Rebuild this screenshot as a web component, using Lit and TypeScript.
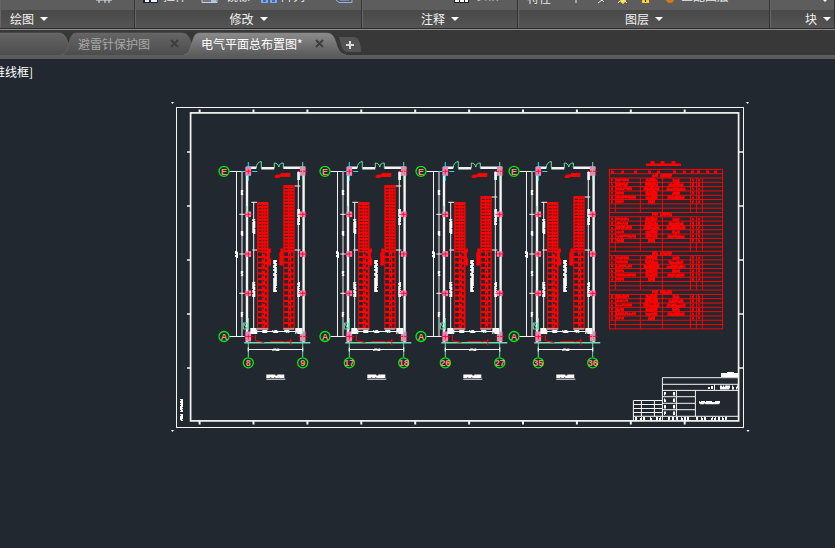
import { LitElement, html, svg, css } from "lit";
import { customElement } from "lit/decorators.js";
import { classMap } from "lit/directives/class-map.js";

const range = (n: number) => Array.from({ length: n }, (_, i) => i);

/** Tiny lettering seen from far away: a solid run of bars with slightly uneven heights. */
function scribble(x: number, y: number, length: number, size: number, upright = false) {
  let d = "";
  for (let i = 0; i < length; i++) {
    const seed = Math.sin(i * 12.9 + x * 7.3 + y * 3.1) * 43758.5;
    const n = seed - Math.floor(seed);
    const cut = n < 0.18 ? size * 0.3 : 0;
    const low = n > 0.8 ? size * 0.25 : 0;
    const s = size - cut - low;
    d += upright
      ? `M${x + cut} ${y + i}h${s}v1h${-s}z`
      : `M${x + i} ${y + cut}h1v${s}h-1z`;
  }
  return d;
}

interface Bay { x: number; left: string; right: string; rightTop: number; }

const bays: Bay[] = [
  { x: 248, left: "8", right: "9", rightTop: 185 },
  { x: 349, left: "17", right: "18", rightTop: 185 },
  { x: 445, left: "26", right: "27", rightTop: 196 },
  { x: 538, left: "35", right: "36", rightTop: 196 },
];

@customElement("drawing-sheet")
export class DrawingSheet extends LitElement {
  static styles = css`
    :host { display: block; }
    svg { display: block; width: 100%; }
    .w { stroke: #f4f4f4; fill: none; }
    .wf { fill: #fff; }
    .r { stroke: #f00; fill: none; }
    .rf { fill: #f00; }
    .bg { fill: #212830; }
    .p { fill: #ff7cba; }
    .c { stroke: #00f0f0; fill: none; }
    .g { stroke: #6fdcab; fill: none; }
    .bubble { stroke: #00f000; fill: none; stroke-width: 1.3; }
    .mark { fill: #ff8a80; font: 700 9px "Liberation Sans Narrow", "Liberation Sans", Arial, sans-serif; text-anchor: middle; }
  `;

  private cabinets(x: number, top: number, mirrored: boolean) {
    const upper = range(Math.ceil((248 - top) / 3.2)).map((i) => top + 3 + i * 3.2);
    const lower = range(14).map((i) => 252.5 + i * 5.5);
    return svg`
      <rect class="rf" x=${x} y=${top} width="11.4" height=${329 - top}></rect>
      ${upper.map((y) => svg`<path class="bg" d="M${x + 1.5} ${y}h3v1h-3zM${x + 6} ${y}h1.2v1h-1.2zM${x + 8.5} ${y}h1.5v1h-1.5z"></path>`)}
      ${lower.map((y, i) => svg`<path class="bg" d="M${x + 1} ${y}h3.6v3.6h-3.6z${
        mirrored
          ? `M${x + 5.6} ${y + 2}h1.2v1.8h-1.2zM${x + 8} ${y}h2v3.6h-2z`
          : `M${x + 5.6} ${y}h${i % 3 ? 1 : 2}v1.8h-${i % 3 ? 1 : 2}zM${x + 8} ${y + 1}h1.6v2.8h-1.6z`}"></path>`)}`;
  }

  private bay({ x, left, right, rightTop }: Bay) {
    const axes = [171.3, 214.3, 254, 293.3, 336.5];
    return svg`<g transform="translate(${x + 0.3} 0)">
      <path class="w" d="M-19 171.5H-2M-19 336.5H-2M-11.8 171V337M-6.3 171V337"></path>
      <path class="w" d="M-9 214.3h6M-9 254h6M-9 293.3h6"></path>
      <path class="wf" d="${scribble(-7.5, 190, 5, 2.4, true)}${scribble(-7.5, 231, 5, 2.4, true)}${scribble(-7.5, 271, 5, 2.4, true)}${scribble(-7.5, 312, 5, 2.4, true)}${scribble(-13.3, 251, 7, 3, true)}"></path>
      <path class="w" stroke-width="2.4" d="M-1.3 167V343M55.3 167V343M-2 167.8H8M13 168.3H26M35 167.8H57"></path>
      <path class="w" d="M5.4 202V331M50 171V331M3 202.3h6M4 250h5M46 ${rightTop + 1}h6M46 250h6"></path>
      <path class="wf" d="${scribble(4, 219, 15, 3, true)}${scribble(4, 282, 15, 3, true)}${scribble(49, 209, 16, 2.6, true)}${scribble(49, 282, 15, 2.6, true)}${scribble(49, 172, 8, 2.6, true)}"></path>
      ${this.cabinets(8.8, 202, false)}
      ${this.cabinets(35, rightTop, true)}
      <path class="rf" d="M19 248.5h3.6v4h-1v6h1.2v7H19zM35 248.5h-3v4h-1v13h4z"></path>
      <path class="wf" d="${scribble(24.9, 260, 32, 3.6, true)}"></path>
      <path class="rf" d="M26 176l3-1.5h3l1-1.500h9v4h-10l-2 1h-3z"></path>
      ${axes.map((y, i) => {
        const h = i === 0 ? 9 : i === 4 ? 10 : 5.6;
        return svg`
          <rect class="p" x="-2.8" y=${y - h / 2} width="5.600" height=${h}></rect>
          <rect class="p" x="51.6" y=${y - h / 2} width="5.600" height=${h}></rect>
          <path class="r" stroke-width="0.8" d="M-4 ${y}h9M0 ${y - 2}v5M50 ${y}h9M54.400 ${y - 2}v5"></path>`;
      })}
      <path class="c" d="M0 162v6M0 174v7M-7 171.500h4M4 171.500h5"></path>
      <path class="g" d="M54.400 162v19M8 168c0-4 2-6 5-6.500v7M26 168v-5c2 0 4 1 4.500 4c.5-3 2-4 4.500-4v5"></path>
      <path class="g" d="M-1.500 206v8M0 318v12M-5 323h4v6h-4zM-5 323l4 6M0 342v15M54.400 330v27"></path>
      <path class="wf" d="${scribble(2, 328, 7, 6)}${scribble(47, 328, 7, 6)}${scribble(14, 330, 5, 3)}${scribble(24, 330, 6, 3)}${scribble(36, 330, 5, 3)}"></path>
      <path class="w" d="M4 331.500H51M8 329h12M35 329h11"></path>
      <path class="g" stroke-width="1.600" d="M-4 342.800H62"></path>
      <path class="r" d="M7 335v6M8 341l8 1.500M22 341.500h14M37 341.800l6-1M42.500 339v6"></path>
      <path class="w" stroke-width="1.200" d="M0 349.500H55M0 347.500v4M54.400 347.500v4"></path>
      <path class="wf" d="${scribble(24, 348.5, 7, 2.6)}"></path>
      <circle class="bubble" cx="-24.300" cy="171.300" r="5"></circle>
      <circle class="bubble" cx="-24.300" cy="336.500" r="5"></circle>
      <circle class="bubble" cx="0" cy="362.800" r="5"></circle>
      <circle class="bubble" cx="54.400" cy="362.800" r="5"></circle>
      <text class="mark" x="-24.300" y="174.500">E</text>
      <text class="mark" x="-24.300" y="339.700">A</text>
      <text class="mark" x="0" y="366">${left}</text>
      <text class="mark" x="54.400" y="366">${right}</text>
      <path class="wf" d="${scribble(18, 374.6, 18, 3.4)}"></path>
      <path class="w" d="M18 379.200h19"></path>
    </g>`;
  }

  private schedule() {
    const top = 169.4;
    const pitch = 4.31;
    const cols = [615.4, 640.4, 662.4, 690.4, 696.4, 702.4];
    const names = [13, 12, 16, 8, 20, 8];
    const models = [12, 13, 16, 12, 12, 7];
    const notes = [7, 15, 19, 8, 17, 0];
    return svg`
      <path class="rf" d="M646 163.500h35v2.600h-35zM650.500 161h4v3h-4zM660.500 161h4v3h-4zM671.500 161h4v3h-4z"></path>
      <path class="r" d="${range(38).map((i) => `M609 ${top + i * pitch}H723`).join("")}M609.400 169V329M722.600 169V329"></path>
      ${[612, 622, 635, 649, 658, 674, 684, 692, 698, 707, 715].map((x) => svg`<path class="rf" d="${scribble(x - 1, top + 1, 3, 3)}"></path>`)}
      ${range(4).map((g) => {
        const y = top + pitch * (1 + g * 9);
        return svg`
          <path class="r" d="${cols.map((x) => `M${x} ${y + pitch}V${y + pitch * 9}`).join("")}"></path>
          <path class="rf" d="${scribble(652, y, 6, 4)}${scribble(660, y, 12, 4)}"></path>
          ${range(6).map((i) => {
            const ry = y + pitch * (i + 1) + 0.6;
            return svg`<path class="rf" d="${scribble(611, ry, 2, 3)}${scribble(616, ry, names[i], 3)}${scribble(651.5 - models[i] / 2, ry - 0.6, models[i], 4.6)}${scribble(676 - notes[i] / 2, ry, notes[i], 3.8)}${scribble(692, ry, 2, 3)}${scribble(698, ry, 2, 3)}"></path>`;
          })}`;
      })}`;
  }

  private frame() {
    const across = range(10).map((i) => 199.6 + i * 53.9);
    const down = range(5).map((i) => 152 + i * 54);
    return svg`
      <rect class="w" x="176.500" y="107.500" width="567" height="320"></rect>
      <rect class="w" stroke-width="1.700" x="190.600" y="112.900" width="548" height="308"></rect>
      <path class="w" stroke-width="2" d="${across.map((x) => `M${x} 109.500v3M${x} 421v3.500`).join("")}"></path>
      <path class="w" stroke-width="1.300" d="${down.map((y) => `M187 ${y}h4M739 ${y}h4`).join("")}"></path>
      <path class="wf" d="M171 102h3l-1.500 2zM746 102h3l-1.500 2zM171 430h3l-1.500 2zM746.500 430h3l-1.500 2z"></path>
      <path class="wf" d="${scribble(180, 399, 13, 3, true)}${scribble(180, 414, 7, 3, true)}"></path>`;
  }

  private titleBlock() {
    return svg`
      <path class="w" d="M662.400 421V377.700H738M662.400 384.300H738M662.400 390.400H738M633 416.300H738M676.400 390V416M695.400 390V416M662 396.700h33M662 403.300h33M662 409.700h33M714.500 384v6"></path>
      <path class="w" d="M633.400 421V400.500H662M633 404.500h29M633 408.500h29M633 412.500h29M641.400 400v16M654.400 400v16"></path>
      <path class="wf" d="M721 373h6v-1h7v1h4v4h-17z"></path>
      <path class="wf" d="${[392, 398.5, 405, 411.500].map((y) => scribble(664, y, 2, 3.400) + scribble(673, y, 2, 3.400)).join("")}${scribble(699, 401, 21, 3.200)}${scribble(708, 386, 2, 3)}${scribble(711, 386, 2, 3)}${scribble(720, 385.500, 10, 4)}${scribble(732, 385.500, 2, 4)}${scribble(736, 385.500, 2, 4)}"></path>
      <path class="wf" d="${[635, 640, 643, 650, 656, 659, 668, 672, 676, 681, 684, 687, 696, 701, 704, 711, 714, 718, 722, 725].map((x) => scribble(x, 417, 2, 3.500)).join("")}"></path>`;
  }

  render() {
    return html`<svg viewBox="0 84 835 360" role="img" aria-label="电气平面总布置图">
      ${this.frame()}${bays.map((b) => this.bay(b))}${this.schedule()}${this.titleBlock()}
    </svg>`;
  }
}

@customElement("ribbon-panel")
export class RibbonPanel extends LitElement {
  static properties = { name: {} };
  declare name: string;
  static styles = css`
    :host {
      display: grid;
      grid-template-rows: 10px 18px;
      box-sizing: border-box;
      height: 28px;
      border-right: 1px solid #333;
      border-left: 1px solid #666;
      min-width: 0;
      overflow: hidden;
    }
    .tools { overflow: hidden; background: #5d5d5d; }
    button {
      display: flex;
      align-items: center;
      justify-content: var(--title-align, center);
      gap: 6px;
      padding: 0 var(--title-pad, 0);
      border: 0;
      background: linear-gradient(#494949, #545454);
      color: #f2f2f2;
      font: 12px/18px "Noto Sans CJK SC", sans-serif;
      white-space: nowrap;
    }
    .arrow { width: 8px; height: 4px; fill: #fff; }
  `;
  render() {
    return html`
      <div class="tools"><slot></slot></div>
      <button type="button">${this.name}<svg class="arrow" viewBox="0 0 8 4"><path d="M0 0h8L4 4z"></path></svg></button>`;
  }
}

@customElement("app-root")
export class AppRoot extends LitElement {
  static styles = css`
    :host {
      display: flex;
      flex-direction: column;
      min-height: 100vh;
      overflow: hidden;
      background: #212830;
      font: 12px/18px "Noto Sans CJK SC", sans-serif;
    }
    .ribbon {
      display: grid;
      grid-template-columns: 135px 227px 156px 252px 1fr;
      height: 28px;
      background: #5d5d5d;
    }
    .start { --title-align: flex-start; --title-pad: 9px; }
    .end { --title-align: flex-start; --title-pad: 34px; }
    .tool { display: block; width: 100%; height: 10px; }
    .tool text { fill: #e4e8ec; font: 12px "Noto Sans CJK SC", sans-serif; }
    .edge { height: 2px; background: linear-gradient(#2c2c2c 50%, #8c8c8c 50%); }
    .tabs {
      display: flex;
      align-items: flex-end;
      height: 25px;
      background: #383838;
      border-bottom: 4px solid #5c5c5c;
    }
    .tab {
      position: relative;
      display: flex;
      align-items: center;
      box-sizing: border-box;
      height: 23px;
      padding: 0 12px 0 10px;
      color: #a6a6a6;
      justify-content: space-between;
    }
    .first { width: 108px; margin-left: -40px; }
    .second { width: 123px; }
    .third { width: 145px; }
    .active { color: #fff; z-index: 1; }
    .shape { position: absolute; inset: 0 -10px 0 -7px; width: calc(100% + 17px); height: 100%; }
    .tab button {
      position: relative;
      padding: 0;
      border: 0;
      background: none;
      color: inherit;
      font: inherit;
      white-space: nowrap;
    }
    .tab .close { display: flex; width: 9px; height: 9px; }
    .close svg { width: 9px; height: 9px; stroke: #3e3e3e; stroke-width: 2; }
    .add { display: flex; padding: 0; margin: 0 0 3px 2px; border: 0; background: none; }
    .add svg { width: 24px; height: 15px; }
    .model { position: relative; flex: 1; overflow: hidden; padding-top: 25px; }
    .view { position: absolute; top: 4px; left: -7px; color: #fff; white-space: nowrap; }
  `;

  private tab(label: string, width: number, kind: string) {
    const active = kind === "third";
    const w = width + 17;
    return html`<div class=${classMap({ tab: true, [kind]: true, active })}>
      <svg class="shape" viewBox="0 0 ${w} 23" preserveAspectRatio="none" aria-hidden="true">
        <defs><linearGradient id=${"fill-" + kind} x1="0" y1="0" x2="0" y2="1">
          <stop offset="0" stop-color=${active ? "#8b8b8b" : "#656565"}></stop>
          <stop offset="1" stop-color=${active ? "#5c5c5c" : "#4d4d4d"}></stop>
        </linearGradient></defs>
        <path fill=${`url(#fill-${kind})`} stroke=${active ? "#858585" : "#6c6c6c"} stroke-width="0.600"
          d="M0 23C5 22 6 18 8 11C10 4 11 1 16 1H${w - 20}C${w - 14} 1 ${w - 12} 4 ${w - 10} 11C${w - 8} 18 ${w - 6} 22 ${w} 23"></path>
      </svg>
      ${label
        ? html`<button type="button">${label}</button>
          <button type="button" class="close" aria-label="关闭"><svg viewBox="0 0 9 9"><path d="M1 1l7 7M8 1l-7 7"></path></svg></button>`
        : ""}
    </div>`;
  }

  render() {
    return html`
      <header class="ribbon">
        <ribbon-panel class="start" name="绘图">
          <svg class="tool"><path d="M95 0h16M98 0v3M104 0v3M108 0v3" stroke="#dfe8f5"></path></svg>
        </ribbon-panel>
        <ribbon-panel name="修改">
          <svg class="tool">
            <path d="M7 0h15v3H7z" fill="#16263a"></path><path d="M9 0h4v2H9zM15 0h6v2h-6z" fill="#f0f4fa"></path>
            <text x="27" y="1">拉伸</text>
            <path d="M66 0v2.500h15V0" stroke="#c5cede" fill="#777"></path><path d="M75 0h5v2h-5z" fill="#9fc2ff"></path>
            <text x="90" y="1">镜像</text>
            <path d="M125 0h7v3h-7zM134 0h7v3h-7z" fill="#77a9ff"></path><path d="M127 0h3v2h-3zM136 0h3v2h-3z" fill="#3e6eb8"></path>
            <text x="145" y="1">阵列</text>
            <path d="M200 0l3 2.500h13V0M204 0h9" stroke="#8db4f5" fill="none"></path>
          </svg>
        </ribbon-panel>
        <ribbon-panel name="注释">
          <svg class="tool"><path d="M91 0h15v3H91z" fill="#222"></path><path d="M92 0h4v2h-4zM97 0h4v2h-4zM102 0h3v2h-3z" fill="#fff"></path><text x="112" y="0">表格</text></svg>
        </ribbon-panel>
        <ribbon-panel name="图层">
          <svg class="tool">
            <text x="8" y="3">特性</text>
            <path d="M57 0v3M79 3l4-3M83 0l2 2" stroke="#eee" fill="none"></path>
            <path d="M99 3l2-2M108 3l-2-2M104 2v2" stroke="#fff"></path><circle cx="104" cy="0" r="3" fill="#ffe640"></circle>
            <path d="M123 0h7v3h-7z" fill="#ffd21c"></path><path d="M126 0h1v2h-1z" fill="#222"></path>
            <circle cx="151" cy="-1" r="4" fill="#d57a18"></circle>
            <text x="162" y="1">匹配图层</text>
          </svg>
        </ribbon-panel>
        <ribbon-panel class="end" name="块">
          <svg class="tool"><path d="M52 0h4l-2 2z" fill="#fff"></path></svg>
        </ribbon-panel>
      </header>
      <div class="edge"></div>
      <nav class="tabs" aria-label="图纸">
        ${this.tab("", 108, "first")}
        ${this.tab("避雷针保护图", 123, "second")}
        ${this.tab("电气平面总布置图*", 145, "third")}
        <button type="button" class="add" aria-label="新建图纸">
          <svg viewBox="0 0 24 15"><path d="M1 0h14c5 0 8 4 8 15H9C4 14 3 8 1 0z" fill="#545454"></path><path d="M12 4v8M8 8h8" stroke="#d8d8d8" stroke-width="2"></path></svg>
        </button>
      </nav>
      <main class="model">
        <div class="view">维线框]</div>
        <drawing-sheet></drawing-sheet>
      </main>`;
  }
}
